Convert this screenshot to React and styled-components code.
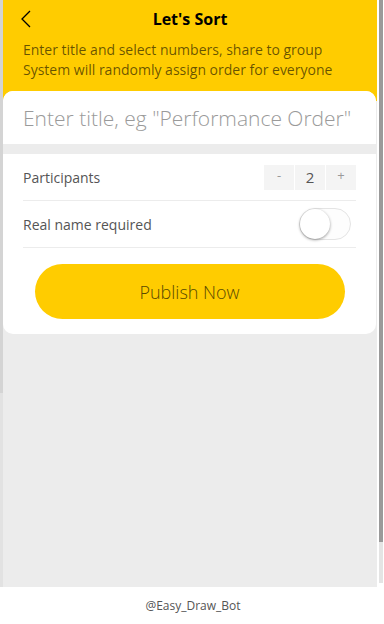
import styled, { createGlobalStyle } from "styled-components";

const GlobalStyle = createGlobalStyle`
  html, body {
    margin: 0;
    padding: 0;
    background: #ffffff;
  }
  body {
    font-family: "Open Sans", "Noto Sans", "Liberation Sans", sans-serif;
    -webkit-font-smoothing: antialiased;
  }
  * {
    box-sizing: border-box;
  }
`;

const Frame = styled.div`
  display: flex;
  height: 587px;
  background: #ffffff;
`;

const Edge = styled.div`
  width: 3px;
  flex-shrink: 0;
  background: linear-gradient(#d4d4d4 0, #d4d4d4 393px, #e2e2e2 393px);
`;

const Main = styled.main`
  width: 374px;
  flex-shrink: 0;
  display: flex;
  flex-direction: column;
  background: #ececec;
`;

const Gutter = styled.div`
  flex: 1;
  display: flex;
  justify-content: center;
  padding-left: 1px;
  background: #ffffff;
`;

const ScrollTrack = styled.div`
  width: 4px;
  height: 583px;
  background: linear-gradient(#9a9a9a 0, #9a9a9a 542px, #e4e4e4 542px);
`;

const Header = styled.header`
  background: #ffcc00;
  padding-bottom: 21px;
`;

const TitleBar = styled.div`
  height: 38px;
  display: flex;
  align-items: center;
  justify-content: center;
  position: relative;
`;

const Back = styled.button`
  position: absolute;
  left: 12px;
  top: 8px;
  width: 22px;
  height: 22px;
  padding: 0;
  border: none;
  background: none;
  display: flex;
  align-items: center;
  justify-content: center;
`;

const Title = styled.h1`
  margin: 0;
  font-size: 16px;
  font-weight: 700;
  color: #000000;
`;

const Intro = styled.p`
  margin: 2px 0 0;
  padding: 0 20px;
  font-size: 14px;
  line-height: 20px;
  color: rgba(0, 0, 0, 0.6);
`;

const Card = styled.section`
  margin: -10px 1px 0 0;
  background: #ffffff;
  border-radius: 10px;
  overflow: hidden;
  padding-bottom: 15px;
`;

const TitleInput = styled.input`
  display: block;
  width: 100%;
  height: 63px;
  border: none;
  border-bottom: 10px solid #ececec;
  padding: 0 20px;
  font-family: inherit;
  font-size: 21px;
  font-weight: 300;
  color: #333;
  &::placeholder {
    color: #9a9a9a;
  }
  &:focus {
    outline: none;
  }
`;

const Rows = styled.div`
  padding: 0 20px;
`;

const Row = styled.div`
  height: 47px;
  display: flex;
  align-items: center;
  justify-content: space-between;
  border-bottom: 1px solid #ececec;
`;

const Label = styled.span`
  font-size: 14px;
  color: #555555;
`;

const Stepper = styled.div`
  display: flex;
  gap: 1px;
`;

const StepCell = styled.span`
  width: 30px;
  height: 25px;
  display: flex;
  align-items: center;
  justify-content: center;
  background: #f4f4f4;
  font-size: ${(p) => (p.$value ? "15px" : "13px")};
  color: ${(p) => (p.$value ? "#555555" : "#9a9a9a")};
  padding-bottom: ${(p) => (p.$value ? "0" : "4px")};
`;

const Toggle = styled.span`
  width: 52px;
  height: 32px;
  margin-right: 5px;
  border-radius: 16px;
  border: 1px solid #e4e4e4;
  background: #fdfdfd;
  display: flex;
  align-items: center;
`;

const Knob = styled.span`
  width: 30px;
  height: 30px;
  border-radius: 50%;
  background: #ffffff;
  box-shadow: 0 1px 3px rgba(0, 0, 0, 0.4);
`;

const Publish = styled.button`
  display: block;
  width: 310px;
  height: 55px;
  margin: 16px auto 0;
  border: none;
  border-radius: 28px;
  background: #ffcc00;
  font-family: inherit;
  font-size: 18px;
  font-weight: 300;
  color: #5a4a00;
`;

const Footer = styled.footer`
  height: 37px;
  display: flex;
  align-items: center;
  justify-content: center;
  padding-left: 2px;
  font-size: 12px;
  color: #555555;
  background: #ffffff;
`;

export default function App() {
  return (
    <>
      <GlobalStyle />
      <Frame>
        <Edge />
        <Main>
          <Header>
            <TitleBar>
              <Back aria-label="Back">
                <svg width="14" height="20" viewBox="0 0 14 20">
                  <path
                    d="M11 2 L3 10 L11 18"
                    fill="none"
                    stroke="#000"
                    strokeWidth="1.3"
                  />
                </svg>
              </Back>
              <Title>Let's Sort</Title>
            </TitleBar>
            <Intro>
              Enter title and select numbers, share to group
              <br />
              System will randomly assign order for everyone
            </Intro>
          </Header>
          <Card>
            <TitleInput placeholder='Enter title, eg "Performance Order"' />
            <Rows>
              <Row>
                <Label>Participants</Label>
                <Stepper>
                  <StepCell>-</StepCell>
                  <StepCell $value>2</StepCell>
                  <StepCell>+</StepCell>
                </Stepper>
              </Row>
              <Row>
                <Label>Real name required</Label>
                <Toggle>
                  <Knob />
                </Toggle>
              </Row>
            </Rows>
            <Publish>Publish Now</Publish>
          </Card>
        </Main>
        <Gutter>
          <ScrollTrack />
        </Gutter>
      </Frame>
      <Footer>@Easy_Draw_Bot</Footer>
    </>
  );
}
